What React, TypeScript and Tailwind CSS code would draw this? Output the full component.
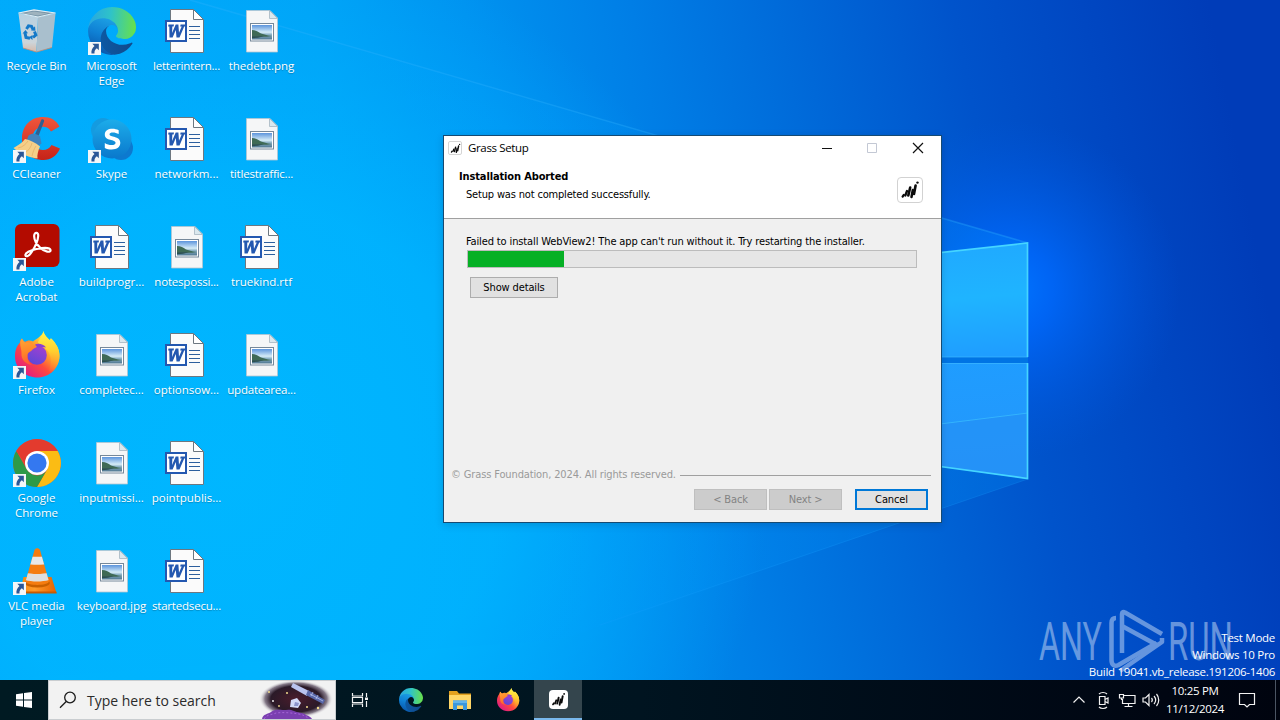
import React from 'react';
import { clsx } from 'clsx';

type IconKind = 'recycle' | 'edge' | 'word' | 'image' | 'ccleaner' | 'skype' | 'acrobat' | 'firefox' | 'chrome' | 'vlc';

interface DesktopItem {
  label: string;
  icon: IconKind;
  shortcut?: boolean;
  tight?: boolean;
}

// Column by column, top to bottom
const desktopItems: DesktopItem[] = [
  { label: 'Recycle Bin', icon: 'recycle' },
  { label: 'CCleaner', icon: 'ccleaner', shortcut: true },
  { label: 'Adobe Acrobat', icon: 'acrobat', shortcut: true },
  { label: 'Firefox', icon: 'firefox', shortcut: true },
  { label: 'Google Chrome', icon: 'chrome', shortcut: true },
  { label: 'VLC media player', icon: 'vlc', shortcut: true },
  { label: 'Microsoft Edge', icon: 'edge', shortcut: true },
  { label: 'Skype', icon: 'skype', shortcut: true },
  { label: 'buildprogr...', icon: 'word' },
  { label: 'completec...', icon: 'image' },
  { label: 'inputmissi...', icon: 'image' },
  { label: 'keyboard.jpg', icon: 'image' },
  { label: 'letterintern...', icon: 'word', tight: true },
  { label: 'networkm...', icon: 'word' },
  { label: 'notespossi...', icon: 'image', tight: true },
  { label: 'optionsow...', icon: 'word' },
  { label: 'pointpublis...', icon: 'word' },
  { label: 'startedsecu...', icon: 'word', tight: true },
  { label: 'thedebt.png', icon: 'image' },
  { label: 'titlestraffic...', icon: 'image', tight: true },
  { label: 'truekind.rtf', icon: 'word' },
  { label: 'updatearea...', icon: 'image', tight: true },
];

const EdgeLogo = ({ className }: { className: string }) => (
  <svg viewBox="0 0 256 256" className={className}>
    <defs>
      <linearGradient id="edge-a" x1="60" y1="177" x2="236" y2="177" gradientUnits="userSpaceOnUse">
        <stop offset="0" stopColor="#0c59a4" />
        <stop offset="1" stopColor="#114a8b" />
      </linearGradient>
      <linearGradient id="edge-b" x1="110" y1="70" x2="50" y2="230" gradientUnits="userSpaceOnUse">
        <stop offset="0" stopColor="#1b9de2" />
        <stop offset="0.5" stopColor="#0f80d4" />
        <stop offset="1" stopColor="#0a5cb0" />
      </linearGradient>
      <linearGradient id="edge-c" x1="10" y1="80" x2="250" y2="100" gradientUnits="userSpaceOnUse">
        <stop offset="0" stopColor="#28a8e0" />
        <stop offset="0.45" stopColor="#2fc3c8" />
        <stop offset="1" stopColor="#66e04e" />
      </linearGradient>
    </defs>
    <path fill="url(#edge-a)" d="M231.1 190.5c-3.4 1.8-6.9 3.4-10.5 4.7a101.5 101.5 0 0 1-35.9 6.5c-47.3 0-88.5-32.5-88.5-74.3.1-11.4 6.4-21.9 16.4-27.3-42.8 1.8-53.8 46.4-53.8 72.5 0 73.9 68.1 81.4 82.8 81.4 7.9 0 19.8-2.3 27-4.6l1.3-.4a128.3 128.3 0 0 0 66.6-52.8 4 4 0 0 0-5.4-5.7z" />
    <path fill="url(#edge-b)" d="M105.7 241.4a79.2 79.2 0 0 1-22.7-21.3 80.7 80.7 0 0 1 29.5-120c3.2-1.5 8.5-4.1 15.6-4a32.4 32.4 0 0 1 25.7 13 31.9 31.9 0 0 1 6.3 18.7c0-.2 24.5-79.6-80-79.6-43.9 0-80 41.7-80 78.2a130.2 130.2 0 0 0 12.1 56 128 128 0 0 0 156.4 67.1 75.5 75.5 0 0 1-62.8-8z" />
    <path fill="url(#edge-c)" d="M152.3 148.9c-.8 1-3.3 2.5-3.3 5.7 0 2.6 1.7 5.1 4.7 7.2 14.4 10 41.5 8.7 41.6 8.7a59.6 59.6 0 0 0 30.3-8.3 61.4 61.4 0 0 0 30.4-52.9c.3-22.4-8-37.3-11.3-43.9C223.5 23.9 177.7 0 128 0A128 128 0 0 0 0 126.2c.5-36.5 36.8-66 80-66 3.5 0 23.5.3 42 10.1a72.6 72.6 0 0 1 30.9 29.3c6.1 10.6 7.2 24.1 7.2 29.5s-2.7 13.3-7.8 19.9z" />
  </svg>
);

const FirefoxLogo = ({ className }: { className: string }) => (
  <svg viewBox="0 0 48 48" className={className}>
    <defs>
      <linearGradient id="ff-body" x1="40" y1="7" x2="9" y2="42" gradientUnits="userSpaceOnUse">
        <stop offset="0.05" stopColor="#fff44f" />
        <stop offset="0.35" stopColor="#ffa12b" />
        <stop offset="0.6" stopColor="#ff4a3d" />
        <stop offset="1" stopColor="#e01a86" />
      </linearGradient>
      <linearGradient id="ff-right" x1="34" y1="2" x2="34" y2="42" gradientUnits="userSpaceOnUse">
        <stop offset="0" stopColor="#fff14a" />
        <stop offset="0.45" stopColor="#ffd02f" />
        <stop offset="1" stopColor="#ff7a2b" stopOpacity="0" />
      </linearGradient>
      <linearGradient id="ff-core" x1="30" y1="14" x2="20" y2="34" gradientUnits="userSpaceOnUse">
        <stop offset="0" stopColor="#a63fd0" />
        <stop offset="1" stopColor="#5b48d8" />
      </linearGradient>
      <linearGradient id="ff-fox" x1="10" y1="8" x2="16" y2="36" gradientUnits="userSpaceOnUse">
        <stop offset="0" stopColor="#ffa436" />
        <stop offset="0.5" stopColor="#ff8428" />
        <stop offset="1" stopColor="#ff4f3a" />
      </linearGradient>
    </defs>
    <path fill="url(#ff-body)" d="M30.500 0C31 4 34 6 36.500 9c.8-.2 1.200-.8 1.300-1.800C43 12 46.500 18 46.500 25c0 12-9.800 21.500-22 21.500S2 37.500 2 25.500c0-6 1.500-10 5-14 .1-1.800.8-3 2-4 .8 1.500 1.500 2.500 3 3.500C14 9.500 17.500 9 20 10.500 23 8 29.500 5 30.500 0z" />
    <path fill="url(#ff-right)" d="M30.500 0C31 4 34 6 36.500 9c.8-.2 1.200-.8 1.300-1.800C43 12 46.500 18 46.500 25c0 7-4.500 14-11.500 17 3-7 5-16-1-23-4-4-7-5-9-7.500C26 7.500 30 5 30.500 0z" />
    <circle cx="24" cy="24" r="9.800" fill="url(#ff-core)" />
    <path fill="url(#ff-fox)" d="M7.200 11.500C7.300 9.800 8 8.500 9 7.500c.8 2 2 3 3.500 4 2.500-.8 5 0 6.500 1.800 2 .2 4.500.2 5.500.7-.3 2.500-3 3-5 4.500-1.500 2.500-4.700 2.500-5 5.500-.5 4 1 7.500 4.500 10C12.500 33 8 29 8.500 22c.2-3-1.500-6-1.300-10.500z" />
    <path fill="#8a3fd2" d="M22 13.500c3.500-1.500 8.500-.5 11 3-2-.7-4-.7-5.500 0-2 .8-4-.5-5.500-3z" />
  </svg>
);

// Grass logo: slanted dabs rising to the right
const GrassMark = ({ className }: { className: string }) => (
  <svg viewBox="0 0 20 20" className={className}>
    <g stroke="#0a0a0a" strokeLinecap="round" fill="none">
      <path strokeWidth="2.200" d="M2.600 16.600l1.200-1.800" />
      <path strokeWidth="2.300" d="M5.300 15.500l1.700-4.500" />
      <path strokeWidth="2.600" d="M8.300 15.500l1.900-8" />
      <path strokeWidth="2.500" d="M11.500 17l1.300-7" />
      <path strokeWidth="2.600" d="M14 14l1.600-8.500" />
    </g>
    <circle cx="17.500" cy="2.600" r="1.200" fill="#0a0a0a" />
  </svg>
);

const WordIcon = () => (
  <svg viewBox="0 0 48 48" className="size-12">
    <path d="M7.500 2.500h23l10 10v33h-33z" fill="#fbfbfb" stroke="#6d7780" />
    <path d="M30.500 2.500v10h10z" fill="#fff" stroke="#6d7780" />
    <rect x="3" y="14" width="20" height="20" fill="#fff" stroke="#2458b0" strokeWidth="2" />
    <path d="M5.500 17.500h5.500l-.4 2h-1.300l-.2 6.500 3.600-8.500h2.700l.6 8.300 2.700-6.300h-1.500l.4-2h5l-.4 2h-1L16.500 30.500h-3l-.7-7.500-3.200 7.500H6.500l-.2-11h-1.200z" fill="#2458b0" />
    <path d="M26 19.500h11M26 23.500h11M26 27.500h11M26 31.500h11" stroke="#2d5f9e" strokeWidth="1.100" />
  </svg>
);

const ImageIcon = () => (
  <svg viewBox="0 0 48 48" className="size-12">
    <defs>
      <linearGradient id="photo-sky" x1="0" y1="0" x2="0" y2="1">
        <stop offset="0" stopColor="#5c94dc" />
        <stop offset="0.5" stopColor="#d5ecf7" />
        <stop offset="0.65" stopColor="#8fb4c8" />
        <stop offset="1" stopColor="#4d7590" />
      </linearGradient>
    </defs>
    <path d="M8.500 3.500h23.500l7.500 7.500v34h-31z" fill="#f5f6f7" stroke="#b5c5d0" strokeWidth="0.800" />
    <path d="M31.500 3.500v8h8z" fill="#dbe8ee" stroke="#a5b5c0" strokeWidth="0.800" />
    <rect x="12.500" y="16.500" width="23" height="17.500" fill="#fff" stroke="#76889a" />
    <rect x="14" y="18" width="20" height="14.500" fill="url(#photo-sky)" />
    <path d="M14 23c4 0 6 1.500 9 3.500l7 2 4 .5-5 .8H14z" fill="#3f6a55" />
    <path d="M14 29.300h12l-6 1.500-6 .4z" fill="#2c5050" />
  </svg>
);

const RecycleIcon = () => (
  <svg viewBox="0 0 48 48" className="size-12">
    <defs>
      <linearGradient id="bin-front" x1="0" y1="0" x2="0" y2="1">
        <stop offset="0" stopColor="#b7d0e0" />
        <stop offset="0.75" stopColor="#ccd5da" />
        <stop offset="1" stopColor="#d8b9a8" />
      </linearGradient>
    </defs>
    <path d="M5.500 6.500L25 10l-1.500 35L10 41z" fill="url(#bin-front)" />
    <path d="M25 10l17.500-3.500L39 40.500 23.500 45z" fill="#a9bfcd" />
    <path d="M5.500 6L21 2.800 42.500 6 25 10z" fill="#7895a8" stroke="#e2edf3" strokeWidth="1.200" />
    <path d="M11 6.300L21 4.500l14 2-10 2z" fill="#9fb3be" />
    <path d="M10 41l13.500 4L39 40.500" fill="none" stroke="#c58b72" strokeWidth="0.800" />
    <g fill="none" stroke="#1479c8" strokeWidth="3">
      <path d="M13.500 22l2-3.200 3 .5 1.500 3" />
      <path d="M21.500 24.500l1.300 3.500-2.800 2.500" />
      <path d="M17 31.200l-4-.8-1-4.400" />
    </g>
    <path d="M18 23.500l4.500.2-.5-4.500zM19.500 28v5l-3.500-2.700zM9.500 26.500l3-3.500 2.500 3.300z" fill="#1479c8" />
  </svg>
);

const CCleanerIcon = () => (
  <svg viewBox="0 0 48 48" className="size-12">
    <defs>
      <linearGradient id="cc-red" x1="0" y1="0" x2="0" y2="1">
        <stop offset="0" stopColor="#f0563c" />
        <stop offset="1" stopColor="#c62318" />
      </linearGradient>
    </defs>
    <path d="M47 33.500C43.500 41 38 45 30.500 45 18 45 9 36.500 9 23.500 9 10.500 18 2 30 2c7.500 0 13 3 16.500 9.500l-8.500 5c-2-3.500-4.500-4.800-8-4.800-6 0-10.500 5-10.500 11.800S24 35 30 35c3.800 0 6.500-1.500 8.500-5z" fill="url(#cc-red)" />
    <path d="M28.500 4.500c1.500-.5 3 .5 2.500 2L25.500 21l-3.500-1.500z" fill="#305f90" />
    <path d="M15.500 20.500c3-2.500 8-2.500 11.500 1l1.500 7-4 3-11-5.500z" fill="#3e82bd" />
    <path d="M12 24c5 1 10.500 3.500 15 7.500-2 4.500-3 8.500-2.500 12-6-.5-17-4-24-10.500C5 30.500 9 28 12 24z" fill="#f5cf88" />
    <path d="M5 33c5-1 8-4 10-7M12 38c4-3 6-6 7-10M19 41c1-4 2-7 4-10" fill="none" stroke="#e3b168" strokeWidth="0.800" />
  </svg>
);

const SkypeIcon = () => (
  <svg viewBox="0 0 48 48" className="size-12">
    <defs>
      <linearGradient id="skype-bg" x1="0" y1="0" x2="0" y2="1">
        <stop offset="0" stopColor="#1cacea" />
        <stop offset="1" stopColor="#0a78cc" />
      </linearGradient>
    </defs>
    <circle cx="15" cy="15" r="12" fill="#149be0" />
    <circle cx="33" cy="33" r="12" fill="#0d79cf" />
    <circle cx="24" cy="24" r="19.500" fill="url(#skype-bg)" />
    <path d="M30.700 15.200c-2-1-4-1.500-6.200-1.500-4.500 0-7.700 2-7.700 5.800 0 7 10.800 4.500 10.800 8.300 0 1.600-1.700 2.300-4 2.300-2.500 0-4.700-.8-6.800-2.200v5c2 1 4.200 1.500 6.900 1.500 5.300 0 8.600-2.300 8.600-6.600 0-7.300-10.800-5-10.800-8.500 0-1.300 1.400-1.900 3.400-1.900s4 .6 5.800 1.700z" fill="#fff" />
  </svg>
);

const AcrobatIcon = () => (
  <svg viewBox="0 0 48 48" className="size-12">
    <rect x="2" y="1" width="44.500" height="43" rx="6" fill="#b30b00" />
    <path
      d="M12.500 32.500c-1-2.500 5-5.300 11-6.500 6-1.200 13.500-1.500 14 1 .5 3-6 2-10-2-4.500-4.300-6.500-9.500-6.300-12.500.2-3.500 4.300-3.500 4 .5-.3 5-3.500 11.500-6.500 16-2.500 3.800-5.500 5.300-6.200 3.500z"
      fill="none"
      stroke="#fff"
      strokeWidth="2.200"
      strokeLinejoin="round"
    />
  </svg>
);

const ChromeIcon = () => (
  <svg viewBox="0 0 48 48" className="size-12">
    <circle cx="24" cy="24" r="23.900" fill="#ea4335" />
    <path d="M44.700 12A24 24 0 0 1 24 48l10.400-18L24 12z" fill="#fbbc14" />
    <path d="M3.300 12A24 24 0 0 0 24 48l10.400-18c-5 9-16 8-20.800 0z" fill="#2d9a48" />
    <path d="M3.300 12A24 24 0 0 1 44.700 12H24c-7 0-12 5.500-12 12z" fill="#e33b2e" />
    <circle cx="24" cy="24" r="12" fill="#fff" />
    <circle cx="24" cy="24" r="9.600" fill="#3478f0" />
  </svg>
);

const VlcIcon = () => (
  <svg viewBox="0 0 48 48" className="size-12">
    <defs>
      <linearGradient id="vlc-orange" x1="0" y1="0" x2="1" y2="0">
        <stop offset="0" stopColor="#f58a10" />
        <stop offset="0.4" stopColor="#ff9a2a" />
        <stop offset="1" stopColor="#e66200" />
      </linearGradient>
      <clipPath id="vlc-cone">
        <path d="M21.500 3c1-2.500 4.500-2.500 5.500 0l9 31.500c-1 4.500-22.500 4.500-23.500 0z" />
      </clipPath>
    </defs>
    <path d="M10.500 30h28l5 16H7z" fill="url(#vlc-orange)" />
    <path d="M7.300 44.500h36l.4 2H6.800z" fill="#c95a00" />
    <ellipse cx="24.300" cy="36" rx="12.500" ry="4.500" fill="#c96000" />
    <g clipPath="url(#vlc-cone)">
      <path d="M8 0h32v40H8z" fill="#f57c10" />
      <path d="M8 7.500c8 3 24 3 32 0v8c-8 3-24 3-32 0z" fill="#e8e8e8" />
      <path d="M8 24c8 4 24 4 32 0v7.500c-8 4-24 4-32 0z" fill="#dedede" />
    </g>
  </svg>
);

const iconFor = (kind: IconKind) => {
  switch (kind) {
    case 'recycle':
      return <RecycleIcon />;
    case 'edge':
      return <EdgeLogo className="size-12" />;
    case 'ccleaner':
      return <CCleanerIcon />;
    case 'skype':
      return <SkypeIcon />;
    case 'acrobat':
      return <AcrobatIcon />;
    case 'firefox':
      return <FirefoxLogo className="size-12" />;
    case 'chrome':
      return <ChromeIcon />;
    case 'vlc':
      return <VlcIcon />;
    case 'word':
      return <WordIcon />;
    default:
      return <ImageIcon />;
  }
};

const ShortcutArrow = () => (
  <svg viewBox="0 0 12 12" className="absolute bottom-0 left-0 size-[13px]">
    <path d="M0 0h12v12H0z" fill="#f4f6f8" />
    <path d="M4 1.500h6v6L8.200 5.800C6.500 7 5.800 8.500 6 10.500H3.200C2.800 7.500 4 5.200 6 3.600z" fill="#2b5797" />
  </svg>
);

const DesktopIcon = ({ item }: { item: DesktopItem }) => (
  <div className="flex h-[108px] w-[75px] flex-col items-center pt-[7px]">
    <div className="relative size-12 shrink-0">
      {iconFor(item.icon)}
      {item.shortcut && <ShortcutArrow />}
    </div>
    <span
      className={clsx(
        'mt-[3px] text-center text-[11.5px] leading-[15px] text-white [text-shadow:0_1px_1px_rgba(0,0,0,0.25)]',
        item.label.includes(' ') ? 'w-[66px]' : 'whitespace-nowrap',
        item.tight && 'tracking-[-0.2px]',
      )}
    >
      {item.label}
    </span>
  </div>
);

const Wallpaper = () => (
  <svg viewBox="0 0 1280 720" className="absolute inset-0 h-[720px] w-[1280px]">
    <defs>
      <linearGradient id="wp-base" x1="0" y1="400" x2="1240" y2="160" gradientUnits="userSpaceOnUse">
        <stop offset="0" stopColor="#00adfc" />
        <stop offset="0.3" stopColor="#00a4f6" />
        <stop offset="0.42" stopColor="#0093f0" />
        <stop offset="0.55" stopColor="#007ee6" />
        <stop offset="0.68" stopColor="#0068d8" />
        <stop offset="0.8" stopColor="#0053cb" />
        <stop offset="0.9" stopColor="#0047c2" />
        <stop offset="1" stopColor="#003cb8" />
      </linearGradient>
      <radialGradient id="wp-left" cx="230" cy="470" r="540" gradientUnits="userSpaceOnUse">
        <stop offset="0" stopColor="#00b7ff" />
        <stop offset="0.5" stopColor="#00b5ff" stopOpacity="0.85" />
        <stop offset="1" stopColor="#00a8ff" stopOpacity="0" />
      </radialGradient>
      <radialGradient id="wp-glow" cx="1010" cy="290" r="170" gradientUnits="userSpaceOnUse">
        <stop offset="0" stopColor="#0074ff" />
        <stop offset="0.25" stopColor="#006aff" stopOpacity="0.8" />
        <stop offset="1" stopColor="#0058e0" stopOpacity="0" />
      </radialGradient>
      <linearGradient id="wp-pane" x1="940" y1="240" x2="960" y2="480" gradientUnits="userSpaceOnUse">
        <stop offset="0" stopColor="#20a8ff" />
        <stop offset="0.25" stopColor="#1fb4ff" />
        <stop offset="0.5" stopColor="#1f9dff" />
        <stop offset="1" stopColor="#2496fb" />
      </linearGradient>
      <linearGradient id="wp-beam" x1="290" y1="0" x2="1028" y2="0" gradientUnits="userSpaceOnUse">
        <stop offset="0" stopColor="#00a8ff" stopOpacity="0.1" />
        <stop offset="1" stopColor="#0096ff" stopOpacity="0.6" />
      </linearGradient>
    </defs>
    <path d="M0 0h1280v720H0z" fill="url(#wp-base)" />
    <path d="M0 0h1280v720H0z" fill="url(#wp-left)" />
    <path d="M700 60h580v500H700z" fill="url(#wp-glow)" />
    <path d="M190 0L1028 243v236L560 640 0 680V0z" fill="url(#wp-beam)" opacity="0.4" />
    <path d="M190 0L1028 243" stroke="#33b4ff" strokeWidth="1.500" opacity="0.3" />
    <path d="M1028 479L600 625" stroke="#20a0ff" opacity="0.2" />
    <path d="M900 257L1028 243v114H900z" fill="url(#wp-pane)" />
    <path d="M900 363h128v116L900 461z" fill="url(#wp-pane)" />
    <path d="M900 357h128v6H900z" fill="#0074e4" />
    <path d="M900 429L1028 413v66L900 461z" fill="#2490f5" opacity="0.6" />
    <path d="M900 429L1028 413" stroke="#3cc0ff" strokeWidth="1.200" opacity="0.7" />
    <path d="M900 357h128M900 363.500h128" stroke="#3cb8ff" opacity="0.7" />
    <path d="M900 257L1027.500 243v114M1027.500 363v115.500L900 461" fill="none" stroke="#45d5ff" strokeWidth="1.700" />
  </svg>
);

const AnyRunWatermark = () => (
  <svg viewBox="0 0 200 70" className="absolute left-[1036px] top-[606px] h-[70px] w-[200px] overflow-visible">
    <g fill="#a9c6ef" opacity="0.6" fontFamily="Roboto, sans-serif" fontSize="53" fontWeight="400">
      <text x="3" y="54" textLength="63" lengthAdjust="spacingAndGlyphs">ANY</text>
      <text x="132" y="54" textLength="65" lengthAdjust="spacingAndGlyphs">RUN</text>
    </g>
    <g fill="none" stroke="#a9c6ef" strokeWidth="4.500" strokeLinejoin="round" opacity="0.6">
      <path d="M80 12c-3 0-4.500 2-4.500 5v37c0 5 3 7 7 5l38-22" />
      <path d="M86 47V8c0-2 1.500-2.500 3-1.500L126 28" />
      <path d="M86 20l35 19" />
      <path d="M84 65l42-29v-4" />
    </g>
  </svg>
);

const buttonBase = 'flex h-[21px] items-center justify-center border pt-px text-[11px]';

const SetupDialog = () => (
  <div className="absolute left-[443px] top-[135px] flex h-[388px] w-[499px] flex-col border border-[#164a72] bg-[#f0f0f0] font-['DejaVu_Sans_Condensed','DejaVu_Sans',sans-serif] text-[11px] tracking-[-0.13px] text-black shadow-[0_2px_8px_rgba(0,0,0,0.15)]">
    <div className="h-[83px] shrink-0 border-b border-[#a0a0a0] bg-white">
      <div className="flex h-[24px] items-center pl-[4px]">
        <span className="flex size-[14px] items-center justify-center rounded-[2px] border border-[#d5d5d5]">
          <GrassMark className="size-[11px]" />
        </span>
        <span className="ml-1.5 grow font-['Open_Sans',sans-serif] text-[11.5px] tracking-[-0.35px]">Grass Setup</span>
        <svg viewBox="0 0 104 12" className="mr-[16px] h-3 w-[104px]" fill="none">
          <path d="M1 6.500h10" stroke="#111" />
          <path d="M46.500 1.500h9v9h-9z" stroke="#c3c8d4" />
          <path d="M92 1l10 10M102 1L92 11" stroke="#111" strokeWidth="1.200" />
        </svg>
      </div>
      <div className="flex justify-between pl-[15px] pr-[18px]">
        <div className="pt-[9px] leading-[16px]">
          <h1 className="font-bold">Installation Aborted</h1>
          <p className="pl-[7px] pt-[2px] tracking-[-0.17px]">Setup was not completed successfully.</p>
        </div>
        <span className="mt-[17px] flex size-[26px] items-center justify-center rounded-[4px] border border-[#d2d2d2]">
          <GrassMark className="size-[20px]" />
        </span>
      </div>
    </div>

    <div className="grow pl-[23px] pr-6 pt-[16px]">
      <p className="-ml-px leading-[14px]">Failed to install WebView2! The app can't run without it. Try restarting the installer.</p>
      <div className="mt-px h-[18px] w-[450px] border border-[#bcbcbc] bg-[#e6e6e6]">
        <div className="h-full w-[96px] bg-[#06b025]" />
      </div>
      <button className={clsx(buttonBase, 'ml-[3px] mt-[9px] w-[88px] border-[#adadad] bg-[#e1e1e1]')}>Show details</button>
    </div>

    <div className="flex items-center gap-1 pl-[7px] pr-[10px] leading-[14px] text-[#9a9a9a]">
      <span className="whitespace-nowrap">© Grass Foundation, 2024. All rights reserved.</span>
      <span className="mt-px h-px grow bg-[#a0a0a0]" />
    </div>
    <div className="flex justify-end pb-3 pr-[13px] pt-[7px]">
      <button className={clsx(buttonBase, 'w-[73px] border-[#bfbfbf] bg-[#cccccc] text-[#838383]')}>&lt; Back</button>
      <button className={clsx(buttonBase, 'ml-[2px] w-[73px] border-[#bfbfbf] bg-[#cccccc] text-[#838383]')}>Next &gt;</button>
      <button className={clsx(buttonBase, 'ml-[13px] w-[73px] border-2 border-[#0078d7] bg-[#e1e1e1]')}>Cancel</button>
    </div>
  </div>
);

const SearchArt = () => (
  <svg viewBox="0 0 76 38" className="h-[38px] w-[76px]">
    <defs>
      <radialGradient id="space" cx="0.5" cy="0.5" r="0.5">
        <stop offset="0" stopColor="#4a1c2c" />
        <stop offset="0.68" stopColor="#2a1a28" />
        <stop offset="0.84" stopColor="#55465a" stopOpacity="0.7" />
        <stop offset="1" stopColor="#f2f2f2" stopOpacity="0" />
      </radialGradient>
    </defs>
    <ellipse cx="37" cy="18" rx="37" ry="19" fill="url(#space)" />
    <path d="M3 38c1-5 6-5 9-7 4-3 8-2 12-2s7-1 11 1c3 2 9 1 12 4 3 1 5 2 6 4z" fill="#7a3fb0" />
    <path d="M5 38c3-5 8-4 12-6 8-1 16 0 23 1 5 1 8 3 10 5" fill="none" stroke="#a565d6" strokeDasharray="2 2" />
    <path d="M34 2l16 8-2 5-16-9z" fill="#b9c3ee" />
    <path d="M49 9l17 10-2 4-17-9z" fill="#5867a8" />
    <path d="M51 13l13 7M54 11l-2 4M59 14l-2 4" stroke="#b9c3ee" strokeWidth="0.800" />
    <path d="M32 19l6-2 4 5-3 5-8-1z" fill="#d2d9f7" />
    <path d="M36 21l4 1-1 3-4 0z" fill="#8b93cb" />
    <g fill="#f3dd8e">
      <circle cx="28" cy="12" r="1" />
      <circle cx="10" cy="11" r="1" />
      <circle cx="20" cy="25" r="0.900" />
      <circle cx="48" cy="26" r="1" />
      <circle cx="59" cy="27" r="1.200" />
    </g>
    <circle cx="14" cy="20" r="0.900" fill="#fff" />
  </svg>
);

const FolderIcon = () => (
  <svg viewBox="0 0 24 24" className="size-6">
    <path d="M1 3h8l2 2.500h12V20H1z" fill="#e3a11f" />
    <path d="M1 7h22v14H1z" fill="#ffd667" />
    <path d="M5 12.500h14V22h-4v-4.500H9V22H5z" fill="#3a97dc" />
    <path d="M5 12.500h14V15H5z" fill="#64b5ea" />
  </svg>
);

const Taskbar = () => (
  <div className="absolute bottom-0 left-0 flex h-10 w-full bg-gradient-to-r from-[#001a22] via-[#001420] to-[#00040f]">
    <div className="flex w-12 items-center justify-center">
      <svg viewBox="0 0 16 16" className="size-4" fill="#fff">
        <path d="M0 2.300l7-1v6.300H0zM8 1.100L16 0v7.600H8zM0 8.500h7v6.300l-7-1zM8 8.500h8V16l-8-1.100z" />
      </svg>
    </div>
    <div className="flex w-72 items-center border border-[#c9cdd0] bg-[#f2f2f2]">
      <svg viewBox="0 0 18 18" className="ml-[10px] size-[18px]" fill="none" stroke="#1b1b1b" strokeWidth="1.300">
        <circle cx="11" cy="6.500" r="5.300" />
        <path d="M7.200 10.500L1 16.700" />
      </svg>
      <span className="ml-[10px] grow whitespace-nowrap text-[14px] text-[#2b2b2b]">Type here to search</span>
      <SearchArt />
    </div>
    <div className="flex w-12 items-center justify-center">
      <svg viewBox="0 0 18 18" className="size-[18px]" fill="none" stroke="#f2f2f2" strokeWidth="1.200">
        <path d="M1.500 2v3h10V2M1.500 16v-3h10v3M1.500 6.500h10v5h-10zM15.500 2v4M15.500 10v6" />
        <path d="M14 6.500h3v2.500h-3z" fill="#f2f2f2" stroke="none" />
      </svg>
    </div>
    <div className="flex w-[54px] items-center justify-center">
      <EdgeLogo className="size-6" />
    </div>
    <div className="flex w-11 items-center justify-center">
      <FolderIcon />
    </div>
    <div className="flex w-[52px] items-center justify-center">
      <FirefoxLogo className="size-6" />
    </div>
    <div className="flex w-12 items-center justify-center border-b-2 border-[#7ab8ec] bg-[#34454d]">
      <span className="flex size-[19px] items-center justify-center rounded-[4px] bg-white">
        <GrassMark className="size-[15px]" />
      </span>
    </div>
    <div className="ml-auto flex items-center">
      <svg viewBox="0 0 90 20" className="h-5 w-[90px]" fill="none" stroke="#f2f2f2" strokeWidth="1.200">
        <path d="M1.500 12.500L7 7l5.500 5.500" />
        <path d="M27.500 6.500h5.500v8h-5.500zM33 9.500l3-1.500v5l-3-1.500M27 4c2-2 6-2 8 0M27 17c2 2 6 2 8 0" />
        <path d="M52 5.500h11v8H50.500V9M56.500 13.500v3M52.500 16.500h8M47.500 4.500h4v3.500h-4zM49.500 8v2" />
        <path d="M71 8h2.500L77 4.500v11L73.500 12H71zM79.500 8c1 1.200 1 2.800 0 4M82 6c2 2.400 2 5.600 0 8M84.500 4c3 3.500 3 8.500 0 12" />
      </svg>
      <div className="ml-[3px] w-[60px] whitespace-nowrap text-center text-[11.5px] leading-[18px] tracking-[-0.3px] text-white">
        <div>10:25 PM</div>
        <div>11/12/2024</div>
      </div>
      <svg viewBox="0 0 18 18" className="ml-[13px] mr-[19px] size-[18px]" fill="none" stroke="#f2f2f2" strokeWidth="1.200">
        <path d="M1.500 2.500h15v11h-5L9 16l-2.500-2.500h-5z" />
      </svg>
      <span className="mr-[4px] h-10 w-px bg-[#4b5563]" />
    </div>
  </div>
);

export default function App() {
  return (
    <div className="relative h-[720px] w-[1280px] overflow-hidden bg-[#00a8f8] font-['Open_Sans','Noto_Sans',sans-serif]">
      <Wallpaper />
      <div className="relative -ml-px grid w-[300px] grid-flow-col grid-rows-6 justify-start">
        {desktopItems.map((item) => (
          <DesktopIcon key={item.label} item={item} />
        ))}
      </div>
      <AnyRunWatermark />
      <div className="absolute right-[5px] top-[629px] text-right text-[11.5px] leading-[17px] tracking-[-0.27px] text-white">
        <p>Test Mode</p>
        <p>Windows 10 Pro</p>
        <p>Build 19041.vb_release.191206-1406</p>
      </div>
      <SetupDialog />
      <Taskbar />
    </div>
  );
}
